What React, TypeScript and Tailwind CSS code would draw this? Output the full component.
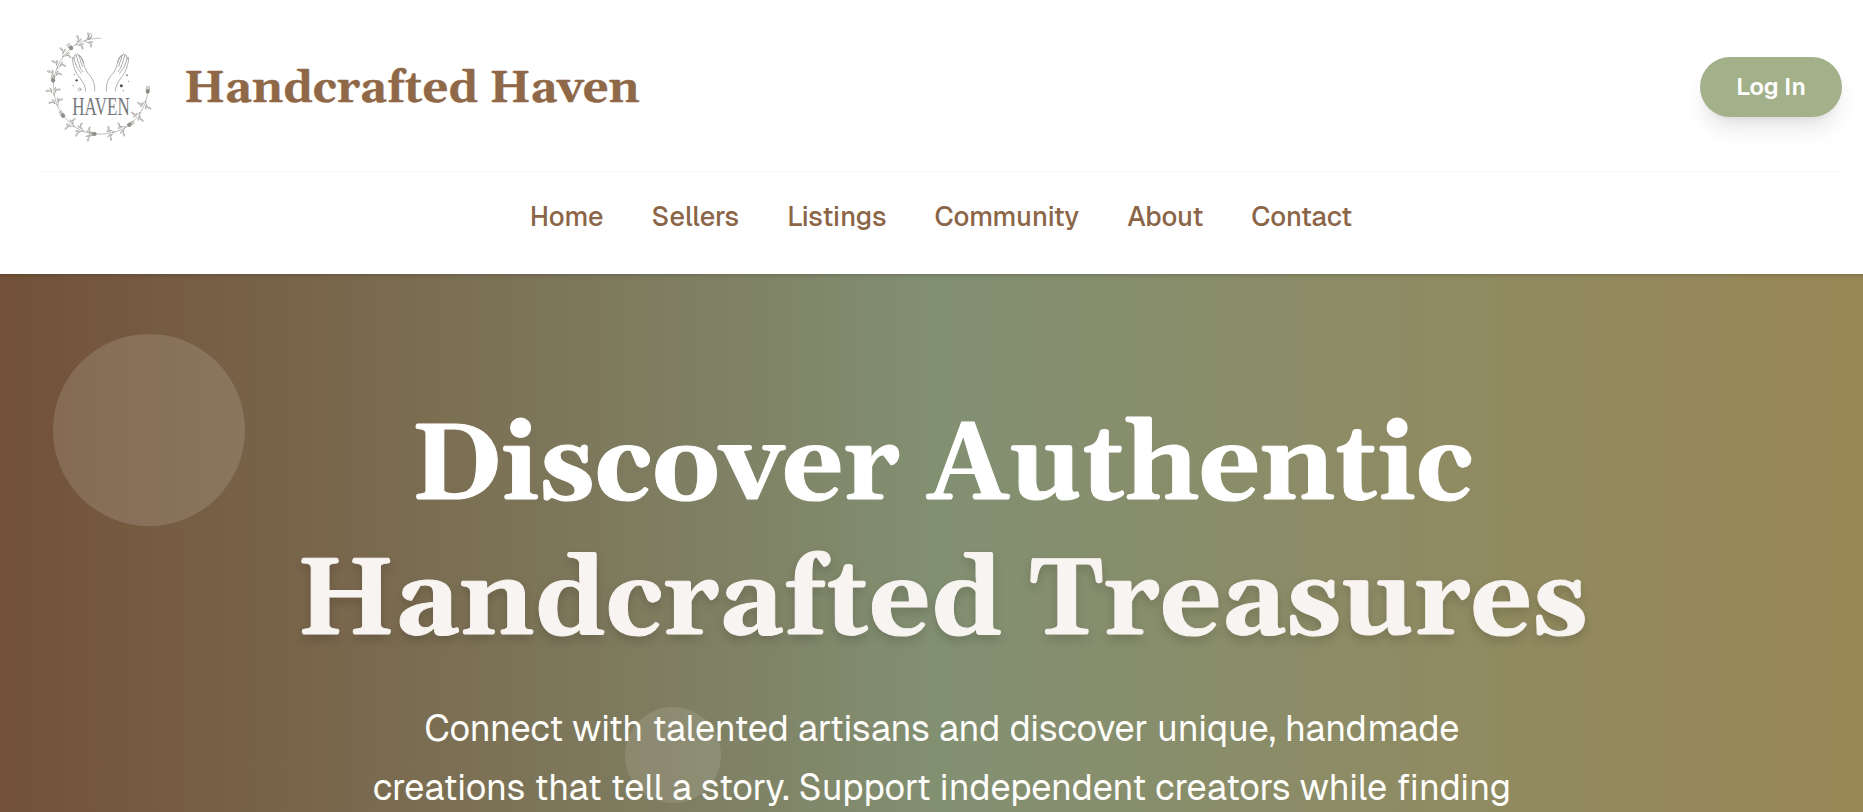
const NAV = ["Home", "Sellers", "Listings", "Community", "About", "Contact"];

/* Leaf sprigs along the wreath: x, y, rotation in degrees */
const SPRIGS: [number, number, number][] = [
  [168, 64, -15],
  [140, 73, -25],
  [100, 108, -50],
  [84, 142, -72],
  [73, 170, -80],
  [72, 222, -98],
  [82, 254, -108],
  [130, 318, -140],
  [158, 332, -158],
  [188, 342, -175],
  [250, 336, 166],
  [284, 322, 152],
  [328, 280, 125],
  [346, 246, 112],
];

const BUDS: [number, number, number][] = [
  [123, 84, -40],
  [69, 181, -5],
  [99, 287, -35],
  [193, 342, -90],
  [298, 314, 60],
  [353, 214, 5],
];

function Sprig({ x, y, r }: { x: number; y: number; r: number }) {
  return (
    <g transform={`translate(${x} ${y}) rotate(${r}) scale(0.85)`} strokeWidth="1.8">
      <path d="M-4 0C4-3 9-8 14-16M-4 0C4 4 9 8 14 14" />
      <path d="M14-16C10-20 11-25 15-28C18-24 18-19 14-16ZM8-8C14-11 18-10 23-12C20-6 14-4 8-8Z" fill="#dededa" />
      <path d="M14 14C10 17 9 21 12 25C16 22 17 18 14 14ZM8 6C14 3 19 5 23 9C17 11 12 10 8 6Z" fill="#dededa" />
    </g>
  );
}

function Logo() {
  return (
    <svg viewBox="0 0 420 390" className="h-[130px] w-[140px] shrink-0" fill="none" stroke="#94938f" strokeWidth="2" strokeLinecap="round" role="img" aria-label="Haven">
      <path d="M212 55C185 54 150 62 128 80C96 106 78 140 71 180C68 225 78 262 104 291C128 322 160 340 196 342C240 344 280 332 304 310C334 284 350 248 354 212" stroke="#a3a29d" />
      {SPRIGS.map(([x, y, r]) => (
        <Sprig key={`${x}-${y}`} x={x} y={y} r={r} />
      ))}
      <path d="M175 58C172 50 176 44 182 40C188 46 186 54 178 58" />
      {BUDS.map(([x, y, r]) => (
        <g key={`${x}-${y}`} transform={`translate(${x} ${y}) rotate(${r})`}>
          <ellipse rx="5" ry="6" fill="#8f8e89" stroke="#85847e" />
          <path d="M-5-5C-5-11-3-13-3-15M0-6V-15M5-5C5-11 3-13 4-15" />
        </g>
      ))}

      {/* left hand */}
      <g stroke="#85868a" strokeWidth="2">
        <path d="M167 213C166 191 151 176 140 160C132 145 128 130 127 115C128 109 131 111 132 117L138 134" />
        <path d="M194 213C196 191 187 174 175 161C166 151 163 137 159 124C156 116 151 107 147 106" />
        <path d="M132 117C133 103 137 100 139 108L149 139M139 108C140 99 145 101 147 107L157 139M147 107C152 105 156 113 160 128" />
        <path d="M138 134C141 146 149 151 154 160M149 139C151 147 156 150 159 155" />
      </g>
      {/* right hand */}
      <g stroke="#85868a" strokeWidth="2">
        <path d="M256 213C257 191 272 176 283 160C291 145 295 130 296 115C295 109 292 111 291 117L285 134" />
        <path d="M229 213C227 191 236 174 248 161C257 151 260 137 264 124C267 116 272 107 276 106" />
        <path d="M291 117C290 103 286 100 284 108L274 139M284 108C283 99 278 101 276 107L266 139M276 107C271 105 267 113 263 128" />
        <path d="M285 134C282 146 274 151 269 160M274 139C272 147 267 150 264 155" />
      </g>

      <g stroke="none" fill="#4c4d52">
        <circle cx="140" cy="181" r="3.5" />
        <circle cx="274" cy="197" r="4.5" />
        <g fill="#8b8c90">
          <circle cx="133" cy="164" r="2" />
          <circle cx="130" cy="197" r="2" />
          <circle cx="291" cy="166" r="3" />
          <circle cx="296" cy="184" r="2" />
          <circle cx="280" cy="212" r="2" />
        </g>
      </g>
      <circle cx="149" cy="208" r="4" stroke="#8b8c90" />

      <text x="127" y="285" textLength="172" lengthAdjust="spacingAndGlyphs" fontSize="76" fill="#77787c" stroke="none" className="font-['Liberation_Serif',serif]">
        HAVEN
      </text>
    </svg>
  );
}

export default function App() {
  return (
    <div className="h-[812px] w-full overflow-hidden bg-white font-['Geist','Inter',sans-serif]">
      <div className="flex h-full w-[1884px] flex-col">
        <header className="relative z-10 h-[274px] shrink-0 bg-white pl-9 pr-[42px] pt-5 shadow-[0_1.5px_4.5px_rgba(0,0,0,0.1),0_1.5px_3px_-1.5px_rgba(0,0,0,0.1)]">
          <div className="-ml-1.5 flex h-[130px] items-center justify-between">
            <div className="flex items-center gap-[14px]">
              <Logo />
              <span className="whitespace-nowrap pt-2 font-['Gelasio','Liberation_Serif',serif] text-[45px] font-bold leading-[54px] text-[#8f6848] [-webkit-text-stroke:0.4px_#8f6848]">
                Handcrafted Haven
              </span>
            </div>
            <button className="mt-1 h-[60px] w-[142px] rounded-full bg-[#a3b18a] text-2xl font-semibold text-white shadow-[0_15px_22px_-4px_rgba(0,0,0,0.1),0_6px_9px_-6px_rgba(0,0,0,0.1)]">
              Log In
            </button>
          </div>
          <nav className="mt-[21px] flex justify-center gap-12 border-t-[1.5px] border-[#f8f7f7] pl-1 pt-6">
            {NAV.map((item) => (
              <a key={item} className="text-[27px] font-medium leading-[42px] text-[#8b6547]">
                {item}
              </a>
            ))}
          </nav>
        </header>

        <section className="relative flex-1 bg-linear-to-r from-[#725138] via-[#829072] to-[#998654]">
          <div className="absolute left-[53px] top-[60px] size-48 rounded-full bg-white/13" />
          <div className="absolute left-[625px] top-[433px] size-24 rounded-full bg-white/11" />
          <div className="relative flex flex-col items-center whitespace-nowrap pt-[126px] text-center">
            <h1 className="font-['Gelasio','Liberation_Serif',serif] text-[108px] font-bold leading-[135px] text-white [-webkit-text-stroke:1px_currentColor]">
              <span className="block">Discover Authentic</span>
              <span className="block text-[#f8f4f1] drop-shadow-[0_5px_5px_rgba(0,0,0,0.15)]">Handcrafted Treasures</span>
            </h1>
            <p className="mt-[30px] text-4xl leading-[58.5px] text-[#fffefb]">
              Connect with talented artisans and discover unique, handmade
              <br />
              creations that tell a story. Support independent creators while finding
            </p>
          </div>
        </section>
      </div>
    </div>
  );
}
